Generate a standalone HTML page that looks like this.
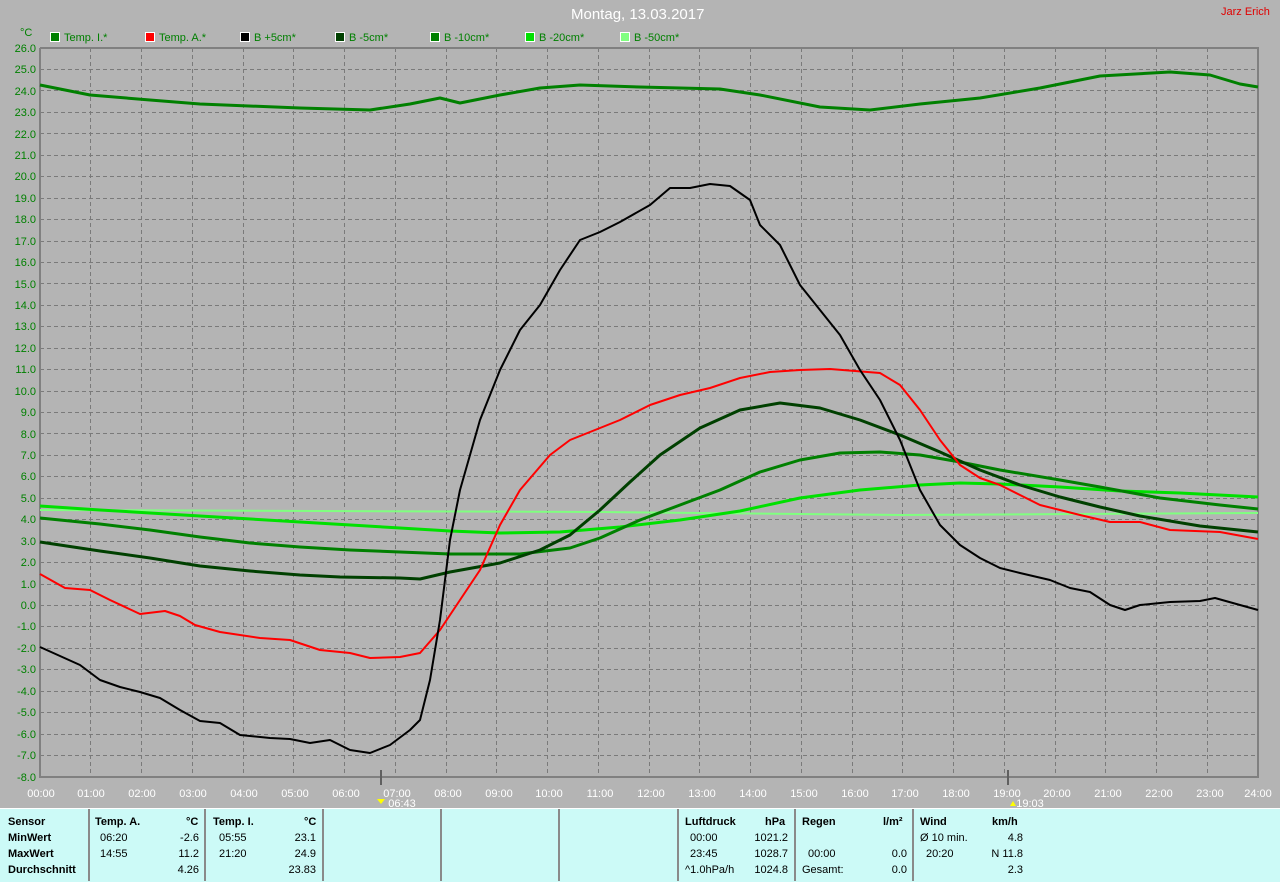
<!DOCTYPE html>
<html><head><meta charset="utf-8"><style>
html,body{margin:0;padding:0}
body{width:1280px;height:881px;background:#b4b4b4;position:relative;overflow:hidden;font-family:"Liberation Sans",sans-serif}
.t{position:absolute;font-size:11px;white-space:nowrap}
.tb{position:absolute;left:0;top:808px;width:1280px;height:73px;background:#ccfaf7;border-top:1px solid #fff}
.v{position:absolute;top:809px;width:2px;height:72px;background:#8a8a8a}
.c{position:absolute;font-size:11px;color:#000;white-space:nowrap}
.b{font-weight:bold}
</style></head><body>
<div class="t" style="left:571px;top:6px;font-size:15px;color:#fff">Montag, 13.03.2017</div>
<div class="t" style="left:1221px;top:6px;color:#e00000">Jarz Erich</div>
<div class="t" style="left:20px;top:27px;color:#008000">°C</div>
<svg width="1280" height="881" style="position:absolute;left:0;top:0">
<g font-family="Liberation Sans,sans-serif" font-size="11">
<rect x="50.5" y="32.5" width="9" height="9" fill="#008000" stroke="#fff"/><text x="64" y="41" fill="#008000">Temp. I.*</text>
<rect x="145.5" y="32.5" width="9" height="9" fill="#f00" stroke="#fff"/><text x="159" y="41" fill="#008000">Temp. A.*</text>
<rect x="240.5" y="32.5" width="9" height="9" fill="#000" stroke="#fff"/><text x="254" y="41" fill="#008000">B +5cm*</text>
<rect x="335.5" y="32.5" width="9" height="9" fill="#004000" stroke="#fff"/><text x="349" y="41" fill="#008000">B -5cm*</text>
<rect x="430.5" y="32.5" width="9" height="9" fill="#008000" stroke="#fff"/><text x="444" y="41" fill="#008000">B -10cm*</text>
<rect x="525.5" y="32.5" width="9" height="9" fill="#00e000" stroke="#fff"/><text x="539" y="41" fill="#008000">B -20cm*</text>
<rect x="620.5" y="32.5" width="9" height="9" fill="#80ff80" stroke="#fff"/><text x="634" y="41" fill="#008000">B -50cm*</text>
</g>
<path stroke="#7a7a7a" stroke-width="1" stroke-dasharray="4,3" fill="none" shape-rendering="crispEdges" d="
M40 69.5H1258M40 90.5H1258M40 112.5H1258M40 133.5H1258M40 155.5H1258M40 176.5H1258M40 198.5H1258M40 219.5H1258M40 241.5H1258M40 262.5H1258M40 283.5H1258M40 305.5H1258M40 326.5H1258M40 348.5H1258M40 369.5H1258M40 391.5H1258M40 412.5H1258M40 433.5H1258M40 455.5H1258M40 476.5H1258M40 498.5H1258M40 519.5H1258M40 541.5H1258M40 562.5H1258M40 584.5H1258M40 605.5H1258M40 626.5H1258M40 648.5H1258M40 669.5H1258M40 691.5H1258M40 712.5H1258M40 734.5H1258M40 755.5H1258
M90.5 48V777M141.5 48V777M192.5 48V777M243.5 48V777M293.5 48V777M344.5 48V777M395.5 48V777M446.5 48V777M496.5 48V777M547.5 48V777M598.5 48V777M649.5 48V777M699.5 48V777M750.5 48V777M801.5 48V777M852.5 48V777M902.5 48V777M953.5 48V777M1004.5 48V777M1055.5 48V777M1105.5 48V777M1156.5 48V777M1207.5 48V777"/>
<path stroke="#808080" stroke-width="2" fill="none" d="M40 48V777H1258V48H40"/>
<path stroke="#606060" stroke-width="2" d="M381 770V785M1008 770V785"/>
<g font-family="Liberation Sans,sans-serif" font-size="11" fill="#008000" text-anchor="end">
<text x="36" y="52">26.0</text><text x="36" y="73">25.0</text><text x="36" y="95">24.0</text><text x="36" y="116">23.0</text><text x="36" y="138">22.0</text><text x="36" y="159">21.0</text><text x="36" y="180">20.0</text><text x="36" y="202">19.0</text><text x="36" y="223">18.0</text><text x="36" y="245">17.0</text><text x="36" y="266">16.0</text><text x="36" y="288">15.0</text><text x="36" y="309">14.0</text><text x="36" y="330">13.0</text><text x="36" y="352">12.0</text><text x="36" y="373">11.0</text><text x="36" y="395">10.0</text><text x="36" y="416">9.0</text><text x="36" y="438">8.0</text><text x="36" y="459">7.0</text><text x="36" y="480">6.0</text><text x="36" y="502">5.0</text><text x="36" y="523">4.0</text><text x="36" y="545">3.0</text><text x="36" y="566">2.0</text><text x="36" y="588">1.0</text><text x="36" y="609">0.0</text><text x="36" y="630">-1.0</text><text x="36" y="652">-2.0</text><text x="36" y="673">-3.0</text><text x="36" y="695">-4.0</text><text x="36" y="716">-5.0</text><text x="36" y="738">-6.0</text><text x="36" y="759">-7.0</text><text x="36" y="781">-8.0</text>
</g>
<g font-family="Liberation Sans,sans-serif" font-size="11" fill="#fff" text-anchor="middle">
<text x="41" y="797">00:00</text><text x="91" y="797">01:00</text><text x="142" y="797">02:00</text><text x="193" y="797">03:00</text><text x="244" y="797">04:00</text><text x="295" y="797">05:00</text><text x="346" y="797">06:00</text><text x="397" y="797">07:00</text><text x="448" y="797">08:00</text><text x="499" y="797">09:00</text><text x="549" y="797">10:00</text><text x="600" y="797">11:00</text><text x="651" y="797">12:00</text><text x="702" y="797">13:00</text><text x="753" y="797">14:00</text><text x="804" y="797">15:00</text><text x="855" y="797">16:00</text><text x="905" y="797">17:00</text><text x="956" y="797">18:00</text><text x="1007" y="797">19:00</text><text x="1057" y="797">20:00</text><text x="1108" y="797">21:00</text><text x="1159" y="797">22:00</text><text x="1210" y="797">23:00</text><text x="1258" y="797">24:00</text>
<text x="402" y="807">06:43</text><text x="1030" y="807">19:03</text>
</g>
<path d="M377 799l4 5 4-5z" fill="#ff0"/><path d="M1010 806l3-5 3 5z" fill="#ff0"/>
<g fill="none" stroke-linejoin="round">
<polyline stroke="#80ff80" stroke-width="2" points="40,510 600,512 900,515 1258,513"/>
<polyline stroke="#00e000" stroke-width="3" points="40,506 100,510 150,513 200,516 300,522 400,528 450,531 500,533 560,532 620,527 680,520 740,511 800,498 860,490 920,485 960,483 1000,484 1060,487 1120,491 1180,493 1258,497"/>
<polyline stroke="#008000" stroke-width="3" points="40,518 100,524 150,530 200,537 250,543 300,547 350,550 400,552 450,554 520,554 570,548 600,538 640,520 680,505 720,490 760,472 800,460 840,453 880,452 920,455 960,462 1000,470 1060,480 1100,487 1160,498 1220,505 1258,509"/>
<polyline stroke="#004000" stroke-width="3" points="40,542 100,551 150,558 200,566 250,571 300,575 340,577 400,578 420,579 450,572 500,563 540,550 570,535 600,510 630,482 660,455 700,428 740,410 780,403 820,408 860,420 900,435 940,452 980,470 1020,485 1060,497 1100,507 1140,516 1200,526 1258,532"/>
<polyline stroke="#008000" stroke-width="3" points="40,85 90,95 150,100 200,104 300,108 370,110 410,104 440,98 460,103 500,95 540,88 580,85 640,87 720,89 760,95 820,107 870,110 920,104 980,98 1040,88 1100,76 1170,72 1210,75 1240,84 1258,87"/>
<polyline stroke="#f00" stroke-width="2" points="40,574 65,588 90,590 110,600 140,614 165,611 180,616 195,625 220,632 260,638 290,640 320,650 350,653 370,658 400,657 420,653 440,630 460,600 480,570 500,525 520,490 550,455 570,440 590,432 620,420 650,405 680,395 710,388 740,378 770,372 800,370 830,369 880,373 900,385 920,410 940,440 960,465 980,478 1000,485 1020,495 1040,505 1060,510 1080,515 1110,522 1140,522 1170,530 1220,532 1258,539"/>
<polyline stroke="#000" stroke-width="2" points="40,647 60,656 80,665 100,680 120,687 140,692 160,698 180,710 200,721 220,723 240,735 270,738 290,739 310,743 330,740 350,750 370,753 390,745 410,730 420,720 430,680 440,620 450,540 460,490 480,420 500,370 520,330 540,305 560,270 580,240 600,232 620,222 650,205 670,188 690,188 710,184 730,186 750,200 760,225 780,245 800,285 820,310 840,335 860,370 880,400 900,440 920,490 940,525 960,545 980,558 1000,568 1020,573 1050,580 1070,588 1090,592 1110,605 1125,610 1140,605 1170,602 1200,601 1215,598 1240,605 1258,610"/>
</g>
</svg>
<div class="tb"></div>
<div class="v" style="left:88px"></div><div class="v" style="left:204px"></div><div class="v" style="left:322px"></div><div class="v" style="left:440px"></div><div class="v" style="left:558px"></div><div class="v" style="left:677px"></div><div class="v" style="left:794px"></div><div class="v" style="left:912px"></div>
<div class="c b" style="left:8px;top:816px">Sensor</div><div class="c b" style="left:8px;top:832px">MinWert</div><div class="c b" style="left:8px;top:848px">MaxWert</div><div class="c b" style="left:8px;top:864px">Durchschnitt</div>
<div class="c b" style="left:95px;top:816px">Temp. A.</div><div class="c b" style="left:186px;top:816px">°C</div>
<div class="c" style="left:100px;top:832px">06:20</div><div class="c" style="left:100px;top:848px">14:55</div>
<div class="c" style="right:1081px;top:832px">-2.6</div><div class="c" style="right:1081px;top:848px">11.2</div><div class="c" style="right:1081px;top:864px">4.26</div>
<div class="c b" style="left:213px;top:816px">Temp. I.</div><div class="c b" style="left:304px;top:816px">°C</div>
<div class="c" style="left:219px;top:832px">05:55</div><div class="c" style="left:219px;top:848px">21:20</div>
<div class="c" style="right:964px;top:832px">23.1</div><div class="c" style="right:964px;top:848px">24.9</div><div class="c" style="right:964px;top:864px">23.83</div>
<div class="c b" style="left:685px;top:816px">Luftdruck</div><div class="c b" style="left:765px;top:816px">hPa</div>
<div class="c" style="left:690px;top:832px">00:00</div><div class="c" style="left:690px;top:848px">23:45</div><div class="c" style="left:685px;top:864px">^1.0hPa/h</div>
<div class="c" style="right:492px;top:832px">1021.2</div><div class="c" style="right:492px;top:848px">1028.7</div><div class="c" style="right:492px;top:864px">1024.8</div>
<div class="c b" style="left:802px;top:816px">Regen</div><div class="c b" style="left:883px;top:816px">l/m²</div>
<div class="c" style="left:808px;top:848px">00:00</div><div class="c" style="left:802px;top:864px">Gesamt:</div>
<div class="c" style="right:373px;top:848px">0.0</div><div class="c" style="right:373px;top:864px">0.0</div>
<div class="c b" style="left:920px;top:816px">Wind</div><div class="c b" style="left:992px;top:816px">km/h</div>
<div class="c" style="left:920px;top:832px">Ø 10 min.</div><div class="c" style="left:926px;top:848px">20:20</div>
<div class="c" style="right:257px;top:832px">4.8</div><div class="c" style="right:257px;top:848px">N 11.8</div><div class="c" style="right:257px;top:864px">2.3</div>
</body></html>
